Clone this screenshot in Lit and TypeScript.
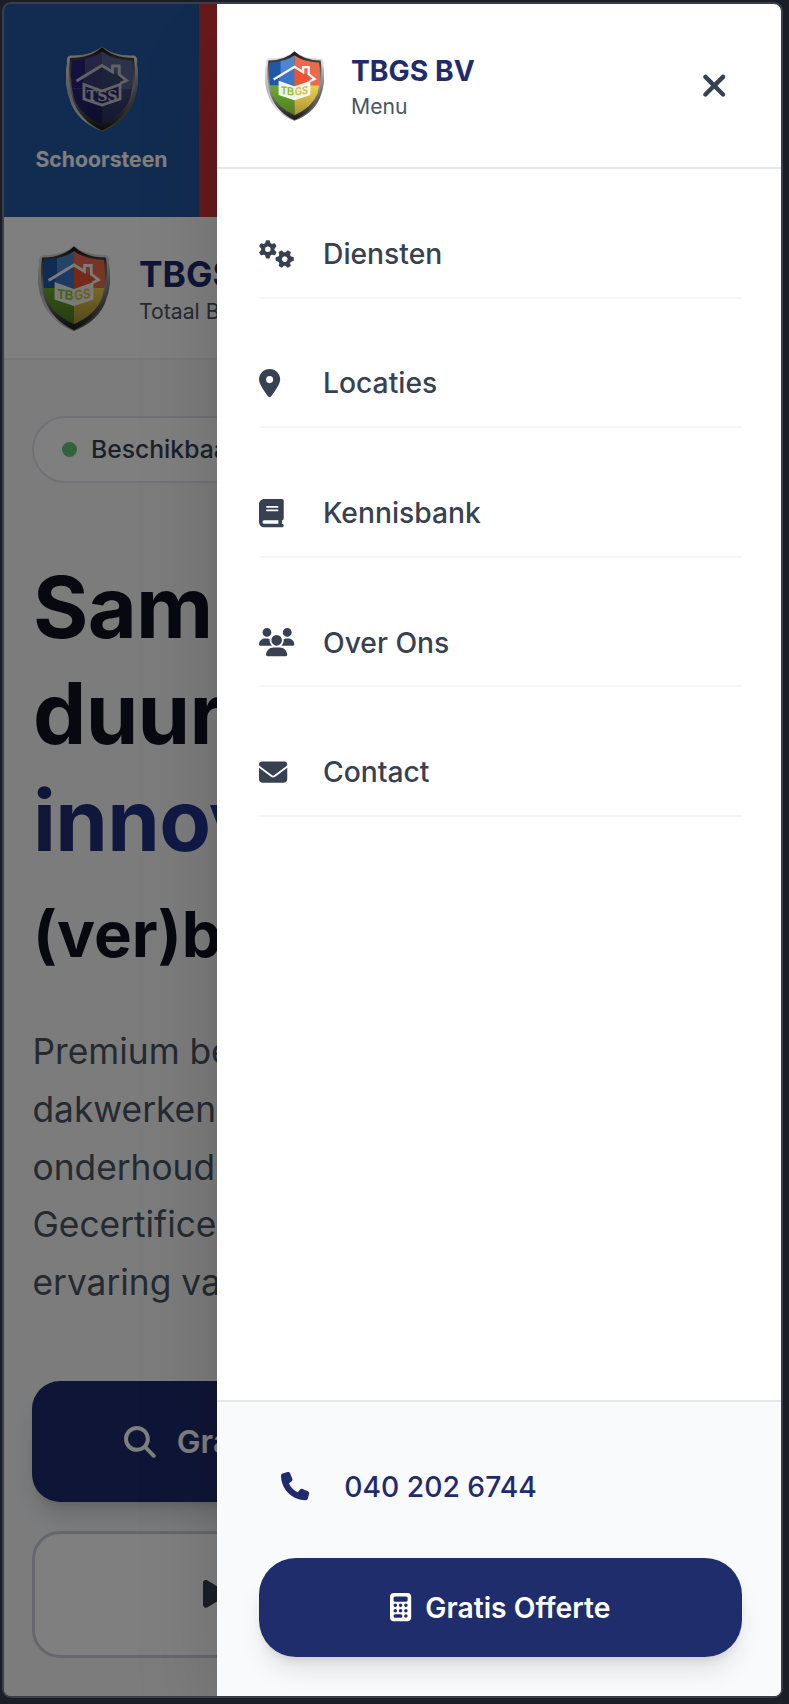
import { LitElement, html, svg, css } from "lit";
import { customElement, property } from "lit/decorators.js";

type Icon = { box: string; body: unknown };

const solid = (w: number, d: string): Icon => ({ box: `0 0 ${w} 512`, body: svg`<path fill-rule="evenodd" d=${d}></path>` });

const gear = (cx: number, cy: number, turn: number) => svg`
  <g transform="translate(${cx} ${cy}) rotate(${turn})">
    <circle r="86" fill="none" stroke="currentColor" stroke-width="72"></circle>
    ${[0, 60, 120, 180, 240, 300].map(
      (a) => svg`<path transform="rotate(${a})" stroke="currentColor" stroke-width="30" stroke-linejoin="round" d="M-36 -96L-22 -150H22L36 -96Z"></path>`
    )}
  </g>`;

const icons: Record<string, Icon> = {
  gears: { box: "0 0 640 512", body: svg`${gear(160, 169, 0)}${gear(466, 346, 30)}` },
  pin: solid(384, "M215.7 499.2C267 435 384 279.4 384 192C384 86 298 0 192 0S0 86 0 192c0 87.4 117 243 168.3 307.2c12.3 15.3 35.1 15.3 47.4 0zM192 128a64 64 0 1 1 0 128 64 64 0 1 1 0-128z"),
  book: solid(448, "M96 0C43 0 0 43 0 96V416c0 53 43 96 96 96H384h32c17.7 0 32-14.3 32-32s-14.3-32-32-32V384c17.7 0 32-14.3 32-32V32c0-17.7-14.3-32-32-32H384 96zm0 384H352v64H96c-17.7 0-32-14.3-32-32s14.3-32 32-32zm32-240c0-8.8 7.2-16 16-16H336c8.8 0 16 7.2 16 16s-7.2 16-16 16H144c-8.8 0-16-7.2-16-16zm16 48H336c8.8 0 16 7.2 16 16s-7.2 16-16 16H144c-8.8 0-16-7.2-16-16s7.2-16 16-16z"),
  users: solid(640, "M144 0a80 80 0 1 1 0 160A80 80 0 1 1 144 0zM512 0a80 80 0 1 1 0 160A80 80 0 1 1 512 0zM0 298.7C0 239.8 47.8 192 106.7 192h42.7c15.9 0 31 3.5 44.6 9.7c-1.3 7.2-1.9 14.7-1.9 22.3c0 38.2 16.8 72.5 43.3 96c-.2 0-.4 0-.7 0H21.3C9.6 320 0 310.4 0 298.7zM405.3 320c-.2 0-.4 0-.7 0c26.6-23.5 43.3-57.8 43.3-96c0-7.6-.7-15-1.9-22.3c13.6-6.3 28.7-9.7 44.6-9.7h42.7C592.2 192 640 239.8 640 298.7c0 11.8-9.6 21.3-21.3 21.3H405.3zM224 224a96 96 0 1 1 192 0 96 96 0 1 1 -192 0zM128 485.3C128 411.7 187.7 352 261.3 352H378.7C452.3 352 512 411.7 512 485.3c0 14.7-11.9 26.7-26.7 26.7H154.7c-14.7 0-26.7-11.9-26.7-26.7z"),
  mail: solid(512, "M48 64C21.5 64 0 85.5 0 112c0 15.1 7.1 29.3 19.2 38.4L236.8 313.6c11.4 8.5 27 8.5 38.4 0L492.8 150.4c12.1-9.1 19.2-23.3 19.2-38.4c0-26.5-21.5-48-48-48H48zM0 176V384c0 35.3 28.7 64 64 64H448c35.3 0 64-28.7 64-64V176L294.4 339.2c-22.8 17.1-54 17.1-76.8 0L0 176z"),
  phone: solid(512, "M164.9 24.6c-7.7-18.6-28-28.5-47.4-23.2l-88 24C12.1 30.2 0 46 0 64C0 311.4 200.6 512 448 512c18 0 33.8-12.1 38.6-29.5l24-88c5.3-19.4-4.6-39.7-23.2-47.4l-96-40c-16.3-6.8-35.2-2.1-46.3 11.6L304.7 368C234.3 334.7 177.3 277.7 144 207.3L193.3 167c13.7-11.2 18.4-30 11.6-46.3l-40-96z"),
  close: solid(384, "M342.6 150.6c12.5-12.5 12.5-32.8 0-45.3s-32.8-12.5-45.3 0L192 210.7 86.6 105.4c-12.5-12.5-32.8-12.5-45.3 0s-12.5 32.8 0 45.3L146.7 256 41.4 361.4c-12.5 12.5-12.5 32.8 0 45.3s32.8 12.5 45.3 0L192 301.3 297.4 406.6c12.5 12.5 32.8 12.5 45.3 0s12.5-32.8 0-45.3L237.3 256 342.6 150.6z"),
  search: solid(512, "M416 208c0 45.9-14.9 88.3-40 122.7L502.6 457.4c12.5 12.5 12.5 32.8 0 45.3s-32.8 12.5-45.3 0L330.7 376c-34.4 25.2-76.8 40-122.7 40C93.1 416 0 322.9 0 208S93.1 0 208 0S416 93.1 416 208zM208 352a144 144 0 1 0 0-288 144 144 0 1 0 0 288z"),
  play: solid(384, "M73 39c-14.8-9.1-33.4-9.4-48.5-.9S0 62.6 0 80V432c0 17.4 9.4 33.4 24.5 41.9s33.7 8.1 48.5-.9L361 297c14.3-8.7 23-24.2 23-41s-8.7-32.2-23-41L73 39z"),
  calculator: solid(384, "M64 0C28.7 0 0 28.7 0 64V448c0 35.3 28.7 64 64 64H320c35.3 0 64-28.7 64-64V64c0-35.3-28.7-64-64-64H64zM96 64H288c17.7 0 32 14.3 32 32v32c0 17.7-14.3 32-32 32H96c-17.7 0-32-14.3-32-32V96c0-17.7 14.3-32 32-32zM64 224a32 32 0 1 1 64 0a32 32 0 1 1-64 0zM160 224a32 32 0 1 1 64 0a32 32 0 1 1-64 0zM256 224a32 32 0 1 1 64 0a32 32 0 1 1-64 0zM64 320a32 32 0 1 1 64 0a32 32 0 1 1-64 0zM160 320a32 32 0 1 1 64 0a32 32 0 1 1-64 0zM256 320a32 32 0 1 1 64 0a32 32 0 1 1-64 0zM64 416c0-17.7 14.3-32 32-32h96c17.7 0 32 14.3 32 32s-14.3 32-32 32H96c-17.7 0-32-14.3-32-32zM256 416a32 32 0 1 1 64 0a32 32 0 1 1-64 0z"),
};

@customElement("ui-icon")
class UiIcon extends LitElement {
  @property() name = "";
  static styles = css`
    :host { display: block; height: 28.25px; flex: none; }
    svg { display: block; height: 100%; fill: currentColor; overflow: visible; }
  `;
  render() {
    const icon = icons[this.name];
    return html`<svg viewBox=${icon.box}>${icon.body}</svg>`;
  }
}

@customElement("brand-shield")
class BrandShield extends LitElement {
  @property() label = "TBGS";
  @property() tone = "color";
  static styles = css`
    :host { display: block; flex: none; }
    svg { display: block; width: 100%; height: 100%; }
    .label { font-family: "Liberation Sans", sans-serif; font-weight: 700; }
    .slab { font-family: "DejaVu Serif", serif; font-weight: 700; }
  `;
  render() {
    const blue = this.tone === "blue";
    const c = blue ? ["#28257a", "#4c4886", "#566593", "#28257a", "#3c437f"] : ["#2058a8", "#4b86cf", "#ea6a4e", "#6bab2d", "#eed04a"];
    const house = blue ? "#c4c4cc" : "#f6f6f6";
    const left = blue ? "#3b3a78" : "#3b74c8";
    const right = blue ? "#3a4476" : "#ea5430";
    const inner = "M36 5Q46 13 66 14Q69 34 64 52Q57 69 36 78Q15 69 8 52Q3 34 6 14Q26 13 36 5Z";
    return html`<svg viewBox="0 0 72 85">
      <defs>
        <linearGradient id="rim" x1="0" y1="0" x2="1" y2="1">
          <stop offset="0" stop-color="#f4f4f4"></stop><stop offset=".3" stop-color="#b4b4b4"></stop>
          <stop offset=".55" stop-color="#e2e2e2"></stop><stop offset=".8" stop-color="#5c5c5c"></stop><stop offset="1" stop-color="#bbb"></stop>
        </linearGradient>
        <linearGradient id="edge" x1="0" y1="0" x2="0" y2="1">
          <stop offset="0" stop-color="#111"></stop><stop offset=".22" stop-color="#555"></stop>
          <stop offset=".5" stop-color="#999"></stop><stop offset="1" stop-color="#161616"></stop>
        </linearGradient>
        <linearGradient id="shade" x1="0" y1="0" x2="0" y2="1">
          <stop offset=".5" stop-color="#000" stop-opacity="0"></stop><stop offset="1" stop-color="#000" stop-opacity=".35"></stop>
        </linearGradient>
        <clipPath id="field"><path d=${inner}></path></clipPath>
      </defs>
      <path fill="url(#rim)" d="M36 0Q48 10 68 9Q72 10 71 17Q75 38 67 57Q59 76 36 85Q13 76 5 57Q-3 38 1 17Q0 10 4 9Q24 10 36 0Z"></path>
      <path fill="url(#edge)" d="M36 0.500Q47 11.500 68 11.500Q71 35 65 54Q58 74 36 84Q14 74 7 54Q1 35 4 11.500Q25 11.500 36 0.500Z"></path>
      <g clip-path="url(#field)">
        <rect width="36" height="42" fill=${c[0]}></rect>
        <rect x="19" width="17" height="42" fill=${c[1]}></rect>
        <rect x="36" width="36" height="42" fill=${c[2]}></rect>
        <rect y="42" width="36" height="43" fill=${c[3]}></rect>
        <rect x="36" y="42" width="36" height="43" fill=${c[4]}></rect>
        <rect width="72" height="85" fill="url(#shade)"></rect>
      </g>
      <path fill=${left} d="M17 31L36 19V44L17 37Z"></path>
      <path fill=${right} d="M36 19L59 33L55 37L36 44Z"></path>
      <path fill="none" stroke=${house} stroke-width="2.8" d="M10.500 34.500L36 19L46.500 25.500V19.500H53.300V28L60.500 34L54.500 36.700"></path>
      <path fill=${blue ? "#2c2a70" : "#f0f3e4"} stroke=${house} stroke-width="2.800" d="M18 38L36 44.500L54 38V52.500L36 58.500L18 52.500Z"></path>
      ${blue
        ? svg`<text class="slab" x="20.5" y="54.5" font-size="14.5" fill=${house} textLength="31" lengthAdjust="spacingAndGlyphs">${this.label}</text>`
        : svg`<text class="label" transform="skewY(7)" x="19.5" y="50" font-size="14" fill="#8ebf35" textLength="16" lengthAdjust="spacingAndGlyphs">${this.label.slice(0, 2)}</text>
            <text class="label" transform="skewY(-7)" x="36.5" y="58.500" font-size="14" fill="#d9bd35" textLength="16" lengthAdjust="spacingAndGlyphs">${this.label.slice(2)}</text>`}
    </svg>`;
  }
}

@customElement("page-behind")
class PageBehind extends LitElement {
  static styles = css`
    :host { display: flex; flex-direction: column; height: 100%; white-space: nowrap; }
    .tabs { display: flex; height: 212.5px; flex: none; }
    .tab { width: 195px; flex: none; box-sizing: border-box; padding-top: 42px; background: #2459a2; color: #fff;
      display: flex; flex-direction: column; align-items: center; font-size: 21.2px; line-height: 28px; font-weight: 700; gap: 13px; }
    .tab.red { background: #d13238; }
    .tab brand-shield { width: 72px; height: 86px; }
    .head { display: flex; flex: none; height: 143px; box-sizing: border-box; background: #fff; border-bottom: 2px solid #eceef2;
      padding: 29px 0 0 34px; gap: 29px; }
    .head brand-shield { width: 72px; height: 85px; }
    .name { font-size: 35.3px; font-weight: 700; line-height: 44px; color: #1f2b6c; padding-top: 7px; }
    .sub { font-size: 21.2px; line-height: 28px; color: #4b5563; }
    .hero { flex: 1; background: #f8f9fb; padding: 56px 28px 0; }
    .pill { display: flex; align-items: center; gap: 14px; height: 67px; box-sizing: border-box; border: 2px solid #e1e3ea;
      border-radius: 33.5px; background: #fff; padding-left: 28px; width: 460px; font-size: 24.7px; font-weight: 500; color: #374151; }
    .dot { width: 15px; height: 15px; border-radius: 50%; background: #62c979; }
    .title { margin: 71px 0 0 1px; font-size: 84.6px; line-height: 106.6px; font-weight: 700; color: #101320; letter-spacing: -.7px; }
    .accent { background: linear-gradient(90deg, #1f2b6c, #2545c8 400px); -webkit-background-clip: text; background-clip: text; color: transparent; }
    .small { font-size: 63.6px; letter-spacing: 0; }
    .copy { margin: 35.5px 0 0 .5px; font-size: 35.3px; line-height: 57.6px; color: #4b5563; }
    .cta, .ghost { display: flex; align-items: center; box-sizing: border-box; border-radius: 28px; font-size: 31.8px; font-weight: 600; }
    .cta { margin-top: 70px; height: 121px; background: #1f2b6c; color: #fff; padding-left: 92px; gap: 21px;
      box-shadow: 0 18px 26px -5px rgba(0,0,0,.14), 0 7px 10px -4px rgba(0,0,0,.1); }
    .cta ui-icon { height: 31.8px; }
    .ghost { margin-top: 28.5px; height: 127px; border: 3.5px solid #cbcfd9; background: #fff; color: #374151; padding-left: 168px; gap: 22px; }
    .ghost ui-icon { height: 31.8px; }
  `;
  render() {
    return html`
      <div class="tabs">
        <div class="tab"><brand-shield label="TSS" tone="blue"></brand-shield><span>Schoorsteen</span></div>
        <div class="tab red"></div>
      </div>
      <div class="head">
        <brand-shield></brand-shield>
        <div><div class="name">TBGS BV</div><div class="sub">Totaal B</div></div>
      </div>
      <div class="hero">
        <div class="pill"><span class="dot"></span>Beschikbaar</div>
        <div class="title">Sam<br />duur<br /><span class="accent">innov</span><br /><span class="small">(ver)b</span></div>
        <p class="copy">Premium be<br />dakwerken<br />onderhoud<br />Gecertificee<br />ervaring van</p>
        <div class="cta"><ui-icon name="search"></ui-icon>Gratis</div>
        <div class="ghost"><ui-icon name="play"></ui-icon></div>
      </div>
    `;
  }
}

@customElement("app-root")
class AppRoot extends LitElement {
  private items = [
    ["gears", "Diensten"],
    ["pin", "Locaties"],
    ["book", "Kennisbank"],
    ["users", "Over Ons"],
    ["mail", "Contact"],
  ];
  static styles = css`
    :host { display: block; box-sizing: border-box; width: 789px; height: 1704px; padding: 2px 6px 6px 2px; background: #1b1e26; overflow: hidden;
      font-family: Inter, "Liberation Sans", sans-serif; }
    .device { position: relative; box-sizing: border-box; height: 1696px; border: 2px solid #3b3e48; border-radius: 9px; overflow: hidden; }
    .scrim { position: absolute; inset: 0; background: rgba(0,0,0,.5); }
    .drawer { position: absolute; top: 0; right: 0; bottom: 0; width: 564.5px; display: flex; flex-direction: column; background: #fff;
      box-shadow: 0 44px 88px -21px rgba(0,0,0,.25); }
    .top { display: flex; height: 165px; box-sizing: border-box; flex: none; border-bottom: 2px solid #e5e7eb; padding: 47px 54px 0 48px; }
    .top brand-shield { width: 59px; height: 70px; margin-right: 27.5px; }
    .brand { flex: 1; padding-top: 2px; }
    .name { font-size: 28.25px; line-height: 37px; font-weight: 700; color: #1f2b6c; }
    .sub { font-size: 21.2px; line-height: 32px; color: #4b5563; }
    .close { color: #374151; padding-top: 16.500px; }
    .close ui-icon { height: 35.3px; }
    .nav { flex: 1; padding: 0 39px 0 42px; }
    .item { display: flex; align-items: center; height: 129.6px; box-sizing: border-box; border-bottom: 2px solid #f5f6f7; padding-top: 42px;
      font-size: 28.25px; font-weight: 500; color: #374151; }
    .slot { width: 64.5px; flex: none; }
    .foot { height: 296px; flex: none; box-sizing: border-box; border-top: 2px solid #e5e7eb; background: #f9fafc; padding: 50px 39px 0 42px; }
    .phone { display: flex; align-items: center; height: 69px; padding-left: 22px; gap: 35.5px; font-size: 28.25px; font-weight: 500; color: #1f2b6c; }
    .offer { display: flex; align-items: center; justify-content: center; margin-top: 37px; height: 99px; border-radius: 37px; background: #202d6c;
      color: #fff; font-size: 28.25px; font-weight: 600; gap: 14px;
      box-shadow: 0 18px 26px -5px rgba(0,0,0,.1), 0 7px 10px -4px rgba(0,0,0,.1); }
  `;
  render() {
    return html`
      <div class="device">
        <page-behind></page-behind>
        <div class="scrim"></div>
        <div class="drawer">
          <div class="top">
            <brand-shield></brand-shield>
            <div class="brand"><div class="name">TBGS BV</div><div class="sub">Menu</div></div>
            <div class="close"><ui-icon name="close"></ui-icon></div>
          </div>
          <div class="nav">
            ${this.items.map(([icon, label]) => html`<div class="item"><div class="slot"><ui-icon name=${icon}></ui-icon></div>${label}</div>`)}
          </div>
          <div class="foot">
            <div class="phone"><ui-icon name="phone"></ui-icon>040 202 6744</div>
            <div class="offer"><ui-icon name="calculator"></ui-icon>Gratis Offerte</div>
          </div>
        </div>
      </div>
    `;
  }
}
